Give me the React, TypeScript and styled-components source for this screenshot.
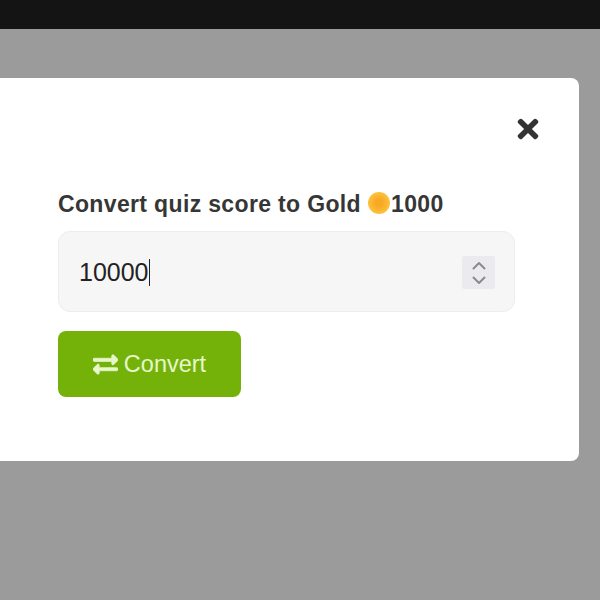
import React from "react";
import styled, { createGlobalStyle } from "styled-components";
import { FaExchangeAlt, FaTimes } from "react-icons/fa";

const Global = createGlobalStyle`
  html, body { margin: 0; padding: 0; height: 100%; overflow: hidden; }
  body { font-family: "Liberation Sans", Arial, sans-serif; background: #9b9b9b; }
`;

const Page = styled.div`
  width: 600px;
  height: 600px;
  display: flex;
  flex-direction: column;
  background: #9b9b9b;
  overflow: hidden;
`;

const TopBar = styled.div`
  height: 29px;
  flex: none;
  background: #141414;
`;

const Modal = styled.div`
  margin: 49px 0 0 -20px;
  width: 599px;
  height: 383px;
  box-sizing: border-box;
  padding: 38px 50px 0 78px;
  background: #fff;
  border-radius: 8px;
  display: flex;
  flex-direction: column;
`;

const CloseRow = styled.div`
  display: flex;
  justify-content: flex-end;
  align-items: center;
  height: 26px;
  color: #333;
  margin-right: -14px;
`;

const Label = styled.div`
  margin-top: 49px;
  display: flex;
  align-items: center;
  height: 26px;
  font-size: 23px;
  font-weight: 700;
  letter-spacing: 0.35px;
  color: #363636;
  white-space: nowrap;
`;

const Coin = styled.span`
  display: inline-block;
  width: 22px;
  height: 22px;
  margin: -2px 1px 0 7px;
  border-radius: 50%;
  background: radial-gradient(circle at 50% 50%, #f9a825 0 22%, #fbbd35 60%, #fdd45f 100%);
`;

const Field = styled.div`
  margin-top: 14px;
  width: 457px;
  height: 81px;
  box-sizing: border-box;
  padding: 2px 19px 0 20px;
  display: flex;
  align-items: center;
  justify-content: space-between;
  background: #f6f6f7;
  border: 1px solid #ededef;
  border-radius: 12px;
`;

const Value = styled.div`
  display: flex;
  align-items: center;
  font-size: 25px;
  color: #222;
`;

const Caret = styled.span`
  width: 1.5px;
  height: 27px;
  background: #222;
`;

const Spinner = styled.div`
  width: 33px;
  height: 33px;
  display: flex;
  align-items: center;
  justify-content: center;
  background: #ebebef;
  border-radius: 2px;
`;

const ConvertButton = styled.button`
  margin-top: 19px;
  width: 183px;
  height: 66px;
  padding: 0;
  border: none;
  border-radius: 8px;
  background: #74b20a;
  color: #e6f7cc;
  font-family: "Liberation Sans", Arial, sans-serif;
  font-size: 23.5px;
  display: flex;
  align-items: center;
  justify-content: center;
  gap: 6px;
`;

const SwapIcon = styled(FaExchangeAlt)`
  stroke: currentColor;
  stroke-width: 15px;
`;

export default function App() {
  return (
    <Page>
      <Global />
      <TopBar />
      <Modal>
        <CloseRow>
          <FaTimes size={30} />
        </CloseRow>
        <Label>
          Convert quiz score to Gold
          <Coin />
          1000
        </Label>
        <Field>
          <Value>
            10000
            <Caret />
          </Value>
          <Spinner>
            <svg width="16" height="26" viewBox="0 0 16 26" fill="none" stroke="#8a8a8f" strokeWidth="2" strokeLinecap="round" strokeLinejoin="round">
              <path d="M2.5 8.5 8 3l5.5 5.5" />
              <path d="M2.5 17.5 8 23l5.5-5.5" />
            </svg>
          </Spinner>
        </Field>
        <ConvertButton>
          <SwapIcon size={25} />
          Convert
        </ConvertButton>
      </Modal>
    </Page>
  );
}
